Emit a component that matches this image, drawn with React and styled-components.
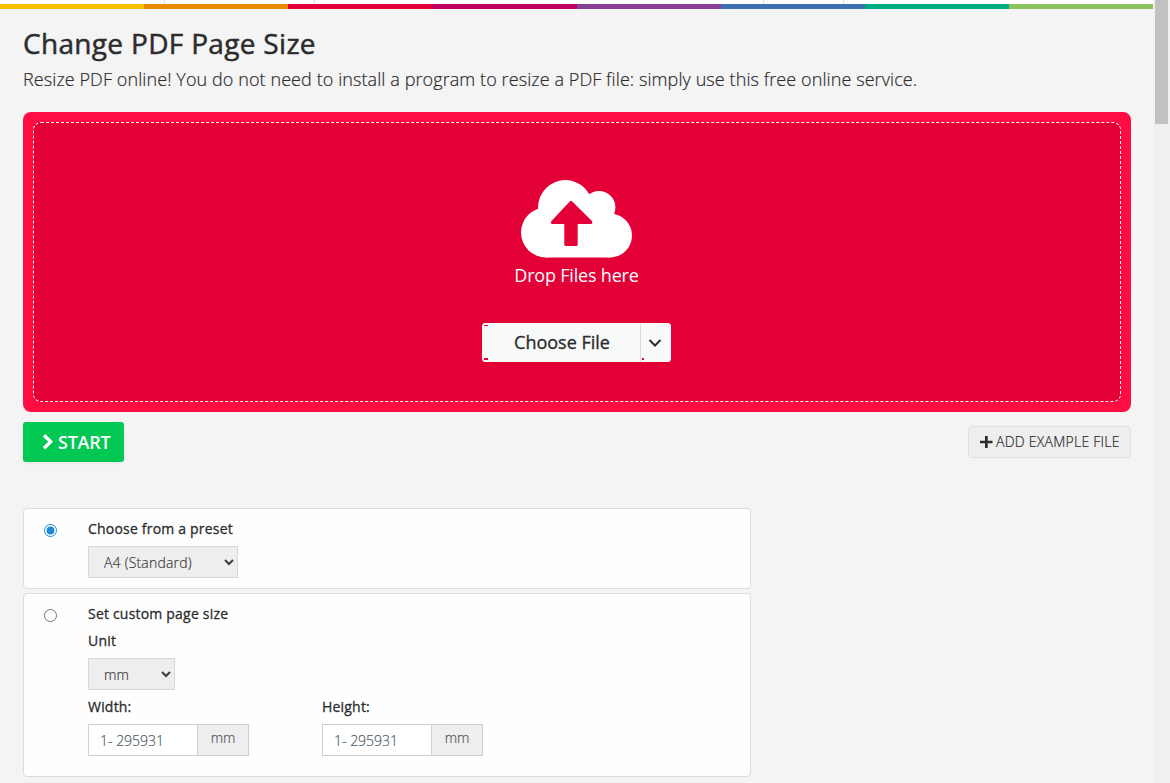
import React, { useState } from 'react';
import styled, { createGlobalStyle } from 'styled-components';

const GlobalStyle = createGlobalStyle`
  * {
    box-sizing: border-box;
  }

  body {
    margin: 0;
    overflow: hidden;
    background: #f4f4f4;
    color: #2c2c2e;
    font-family: 'Open Sans', 'Noto Sans', sans-serif;
    font-size: 14px;
  }

  input,
  select,
  button {
    font-family: inherit;
  }
`;

const Page = styled.div`
  display: flex;
  height: 783px;
  overflow: hidden;
`;

const Content = styled.div`
  width: 1153px;
`;

const ScrollTrack = styled.div`
  width: 17px;
  padding: 0 2px;
  background: #f0f0ef;
`;

const ScrollThumb = styled.div`
  height: 124px;
  background: #c1c1c1;
`;

const NavBottom = styled.div`
  display: flex;
  height: 4px;
  background: #fff;
`;

const NavCell = styled.div`
  width: ${props => props.$width}px;
  border-right: 1px solid #ddd;
`;

const Rainbow = styled.div`
  display: flex;
  height: 5px;
`;

const Stripe = styled.div`
  flex: 1;
  background: ${props => props.$color};
`;

const Main = styled.main`
  width: 1131px;
  padding: 15px 0 0 23px;
`;

const Title = styled.h1`
  margin: 0;
  font-size: 28px;
  font-weight: 500;
  line-height: 38px;
  letter-spacing: 0.32px;
  -webkit-text-stroke: 0.5px;
`;

const Subtitle = styled.p`
  margin: 0 0 20px;
  padding-top: 5px;
  font-size: 18px;
  font-weight: 300;
  line-height: 25px;
  letter-spacing: 0.085px;
  white-space: nowrap;
  -webkit-text-stroke: 0.2px;
`;

const DropZone = styled.div`
  height: 300px;
  padding: 10px;
  border-radius: 8px;
  background: #ff0c43;
`;

const DropInner = styled.div`
  display: flex;
  flex-direction: column;
  align-items: center;
  height: 280px;
  padding: 57px 1px 0 0;
  border: 1px dashed #fff;
  border-radius: 8px;
  background: #e30036;
`;

const DropText = styled.div`
  margin-top: 4px;
  color: #fff;
  font-size: 18px;
  font-weight: 400;
  line-height: 26px;
  letter-spacing: -0.2px;
`;

const ChooseGroup = styled.div`
  display: flex;
  width: 189px;
  height: 39px;
  margin: 35px 1px 0 0;
  overflow: hidden;
  border-radius: 4px;
  background: #f8faf9;
`;

/* small red ticks sit in the corners of both halves */
const ChooseButton = styled.button`
  width: 158px;
  padding: 0 0 1px 3px;
  border: 0;
  background:
    linear-gradient(#e30036, #e30036) 2px 2px / 4px 1px no-repeat,
    linear-gradient(#e30036, #e30036) 2px 35px / 4px 2px no-repeat,
    #f8faf9;
  color: #2c2c2e;
  font-size: 18px;
  font-weight: 500;
  -webkit-text-stroke: 0.35px;
`;

const ChooseArrow = styled.button`
  display: flex;
  align-items: center;
  justify-content: center;
  width: 31px;
  padding: 0 2px 0 0;
  border: 0;
  border-left: 1px solid #dcdedd;
  background:
    linear-gradient(#e30036, #e30036) 1px 35px / 2px 2px no-repeat,
    #f8faf9;
`;

const Actions = styled.div`
  display: flex;
  align-items: center;
  justify-content: space-between;
  height: 40px;
  margin: 10px 0 46px;
`;

const StartButton = styled.button`
  display: flex;
  align-items: center;
  gap: 4px;
  width: 101px;
  height: 40px;
  padding: 0 0 0 19px;
  border: 0;
  border-radius: 3px;
  background: #00c853;
  box-shadow: 0 1px 4px rgba(0, 0, 0, 0.06);
  color: #fff;
  font-size: 18px;
  font-weight: 600;
  letter-spacing: -0.25px;
`;

const ExampleButton = styled.button`
  display: flex;
  align-items: center;
  gap: 3px;
  width: 163px;
  height: 32px;
  padding: 0 0 1px 11px;
  border: 1px solid #dcdfe1;
  border-radius: 4px;
  background: #eee;
  color: #2c2c2e;
  font-size: 14px;
  font-weight: 300;
  letter-spacing: 0.25px;
  white-space: nowrap;
  -webkit-text-stroke: 0.2px;
`;

const Card = styled.section`
  display: flex;
  width: 728px;
  height: ${props => props.$height}px;
  margin-bottom: 4px;
  padding-top: 10px;
  border: 1px solid #dcdcdc;
  border-radius: 4px;
  background: #fefefe;
`;

const Radio = styled.input`
  width: 13px;
  height: 13px;
  margin: 5px 31px 0 20px;
  accent-color: #1f8ad2;
`;

const Label = styled.label`
  display: block;
  font-size: 14px;
  font-weight: 500;
  line-height: 20px;
  letter-spacing: 0.2px;
  margin-bottom: 7px;
  -webkit-text-stroke: 0.3px;
`;

const Select = styled.select`
  display: block;
  width: ${props => props.$width}px;
  height: 32px;
  padding: 0 1px 0 11px;
  border: 1px solid #d8d8d8;
  border-radius: 0;
  background: #eee;
  color: #3c3c40;
  font-size: 14px;
  font-weight: 300;
  letter-spacing: 0.2px;
  -webkit-text-stroke: 0.2px;
`;

const Fields = styled.div`
  display: flex;
  gap: 73px;
  padding-top: 7px;
`;

const InputGroup = styled.div`
  display: flex;
  width: 161px;
  height: 32px;
`;

const SizeInput = styled.input`
  width: 110px;
  padding: 1px 11px;
  border: 1px solid #cbd0d6;
  border-radius: 0;
  background: #fff;
  font-size: 14px;
  font-weight: 300;

  &::placeholder {
    color: #50606c;
    -webkit-text-stroke: 0.2px;
  }
`;

const Suffix = styled.span`
  width: 51px;
  border: 1px solid #ccced0;
  border-left: 0;
  background: #eee;
  color: #505860;
  font-weight: 300;
  line-height: 26px;
  text-align: center;
  -webkit-text-stroke: 0.2px;
`;

const stripes = ['#f6bf00', '#e98b00', '#e30036', '#bd0062', '#883f94', '#3c70b2', '#00ab80', '#8bc45c'];
const navCells = [165, 150, 449, 80];

const CloudUpload = () => (
  <svg width='111' height='78' viewBox='0 0 111 78' fill='#fff'>
    <circle cx='25' cy='52.5' r='25' />
    <circle cx='44.4' cy='27.5' r='27.4' />
    <circle cx='78' cy='27.3' r='16.4' />
    <circle cx='89' cy='55.5' r='22' />
    <path d='M25 77.5H89V40L68 15L30 35Z' />
    <path
      d='M49 21.2Q50 20.2 51 21.2L71 41Q72 44 70 44H56.7V64.5Q56.7 66 55.2 66H44.8Q43.3 66 43.3 64.5V44H31Q29 43 30.5 41Z'
      fill='#e30036'
    />
  </svg>
);

const SizeField = ({ id, label }) => (
  <div>
    <Label htmlFor={id}>{label}</Label>
    <InputGroup>
      <SizeInput id={id} name={id} placeholder='1- 295931' />
      <Suffix>mm</Suffix>
    </InputGroup>
  </div>
);

const App = () => {
  const [mode, setMode] = useState('preset');

  const handleMode = e => {
    setMode(e.target.value);
  };

  return (
    <Page>
      <GlobalStyle />
      <Content>
        <NavBottom>
          {navCells.map(width => (
            <NavCell key={width} $width={width} />
          ))}
        </NavBottom>
        <Rainbow>
          {stripes.map(color => (
            <Stripe key={color} $color={color} />
          ))}
        </Rainbow>

        <Main>
          <Title>Change PDF Page Size</Title>
          <Subtitle>
            Resize PDF online! You do not need to install a program to resize a PDF file: simply use this free online
            service.
          </Subtitle>

          <DropZone>
            <DropInner>
              <CloudUpload />
              <DropText>Drop Files here</DropText>
              <ChooseGroup>
                <ChooseButton type='button'>Choose File</ChooseButton>
                <ChooseArrow type='button'>
                  <svg width='14' height='10' viewBox='0 0 14 10' fill='none' stroke='#2c2c2e' strokeWidth='2'>
                    <path d='M1.5 2L7 7.5L12.5 2' />
                  </svg>
                </ChooseArrow>
              </ChooseGroup>
            </DropInner>
          </DropZone>

          <Actions>
            <StartButton type='button'>
              <svg width='12' height='16' viewBox='0 0 12 16' fill='none' stroke='#fff' strokeWidth='3.4'>
                <path d='M2 1.2L8.7 7.7L2 14.2' />
              </svg>
              START
            </StartButton>
            <ExampleButton type='button'>
              <svg width='13' height='12' viewBox='0 0 13 12' fill='#2c2c2e'>
                <path d='M5 0H7.7V4.7H12.5V7.2H7.7V12H5V7.2H0V4.7H5Z' />
              </svg>
              ADD EXAMPLE FILE
            </ExampleButton>
          </Actions>

          <Card $height={81}>
            <Radio type='radio' name='mode' value='preset' checked={mode === 'preset'} onChange={handleMode} />
            <div>
              <Label htmlFor='preset'>Choose from a preset</Label>
              <Select id='preset' $width={150}>
                <option>A4 (Standard)</option>
              </Select>
            </div>
          </Card>

          <Card $height={184}>
            <Radio type='radio' name='mode' value='custom' checked={mode === 'custom'} onChange={handleMode} />
            <div>
              <Label>Set custom page size</Label>
              <Label htmlFor='unit'>Unit</Label>
              <Select id='unit' $width={87}>
                <option>mm</option>
              </Select>
              <Fields>
                <SizeField id='width' label='Width:' />
                <SizeField id='height' label='Height:' />
              </Fields>
            </div>
          </Card>
        </Main>
      </Content>
      <ScrollTrack>
        <ScrollThumb />
      </ScrollTrack>
    </Page>
  );
};

export default App;
